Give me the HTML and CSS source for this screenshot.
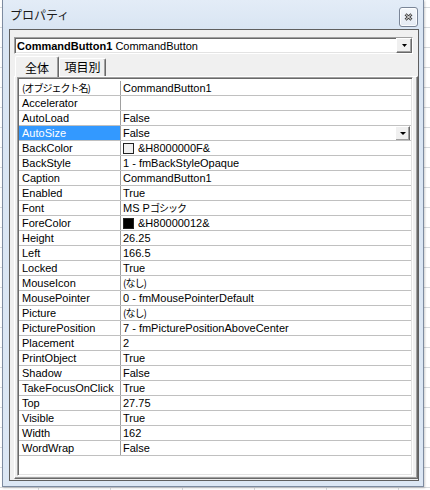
FILE: index.html
```html
<!DOCTYPE html>
<html lang="ja">
	<head>
		<meta charset="UTF-8" />
		<title>プロパティ</title>
		<link rel="stylesheet" href="styles.css">
	</head>
	<body>
		<div class="window">
			<div class="titlebar">
				<span class="title">プロパティ</span>
				<div class="closeBtn">
					<svg width="9" height="8" viewBox="0 0 9 8">
						<path d="M1.5 1.2 L7.5 6.8 M7.5 1.2 L1.5 6.8" stroke="#3c3c3c" stroke-width="2.8" fill="none" />
						<path d="M1.5 1.2 L7.5 6.8 M7.5 1.2 L1.5 6.8" stroke="#fff" stroke-width="1" fill="none" />
					</svg>
				</div>
			</div>

			<div class="client">
				<!-- object selector -->
				<div class="combo">
					<span class="comboText"><b>CommandButton1</b> CommandButton</span>
					<span class="ddBtn"><svg width="5" height="3" viewBox="0 0 5 3"><polygon points="0,0 5,0 2.5,3" fill="#000" /></svg></span>
				</div>

				<div class="tabs">
					<div class="tab active">全体</div>
					<div class="tab">項目別</div>
				</div>

				<div class="page">
					<div class="grid">
						<div class="row"><div class="name"><span class="jp">(オブジェクト名)</span></div><div class="value">CommandButton1</div></div>
						<div class="row"><div class="name">Accelerator</div><div class="value"></div></div>
						<div class="row"><div class="name">AutoLoad</div><div class="value">False</div></div>
						<div class="row"><div class="name sel">AutoSize</div><div class="value">False<span class="ddBtn cellBtn"><svg width="6" height="3" viewBox="0 0 6 3"><polygon points="0,0 6,0 3,3" fill="#000" /></svg></span></div></div>
						<div class="row"><div class="name">BackColor</div><div class="value"><span class="swatch lightSwatch"></span>&amp;H8000000F&amp;</div></div>
						<div class="row"><div class="name">BackStyle</div><div class="value">1 - fmBackStyleOpaque</div></div>
						<div class="row"><div class="name">Caption</div><div class="value">CommandButton1</div></div>
						<div class="row"><div class="name">Enabled</div><div class="value">True</div></div>
						<div class="row"><div class="name">Font</div><div class="value">MS P<span class="jp">ゴシック</span></div></div>
						<div class="row"><div class="name">ForeColor</div><div class="value"><span class="swatch darkSwatch"></span>&amp;H80000012&amp;</div></div>
						<div class="row"><div class="name">Height</div><div class="value">26.25</div></div>
						<div class="row"><div class="name">Left</div><div class="value">166.5</div></div>
						<div class="row"><div class="name">Locked</div><div class="value">True</div></div>
						<div class="row"><div class="name">MouseIcon</div><div class="value"><span class="jp">(なし)</span></div></div>
						<div class="row"><div class="name">MousePointer</div><div class="value">0 - fmMousePointerDefault</div></div>
						<div class="row"><div class="name">Picture</div><div class="value"><span class="jp">(なし)</span></div></div>
						<div class="row"><div class="name">PicturePosition</div><div class="value">7 - fmPicturePositionAboveCenter</div></div>
						<div class="row"><div class="name">Placement</div><div class="value">2</div></div>
						<div class="row"><div class="name">PrintObject</div><div class="value">True</div></div>
						<div class="row"><div class="name">Shadow</div><div class="value">False</div></div>
						<div class="row"><div class="name">TakeFocusOnClick</div><div class="value">True</div></div>
						<div class="row"><div class="name">Top</div><div class="value">27.75</div></div>
						<div class="row"><div class="name">Visible</div><div class="value">True</div></div>
						<div class="row"><div class="name">Width</div><div class="value">162</div></div>
						<div class="row"><div class="name">WordWrap</div><div class="value">False</div></div>
					</div>
				</div>
			</div>
		</div>
	</body>
</html>
```

FILE: styles.css
```css
* {
	margin: 0;
	padding: 0;
	box-sizing: border-box;
}

html, body {
	width: 430px;
	height: 490px;
	overflow: hidden;
}
body {
	/* excel sheet behind the dialog */
	background-color: #fff;
	background-image:
		linear-gradient(to right, #d8dbde 1px, transparent 1px),
		linear-gradient(to bottom, #d8dbde 1px, transparent 1px);
	background-size: 72px 20px;
	background-position: 38px 7px;
	font-family: "Liberation Sans", "Noto Sans CJK JP", sans-serif;
	font-size: 11px;
	color: #000;
}

.window {
	margin-left: 2px;
	width: 422px;
	height: 487px;
	border: 1px solid #7d8ba0;
	border-top: none;
	background: linear-gradient(to bottom, #e3ecf7, #d9e5f3 29px, #dce7f4);
	padding: 0 4px 5px 6px;
	box-shadow: 1px 1px 2px rgba(0, 0, 0, 0.2);
}

.titlebar {
	height: 29px;
	display: flex;
	justify-content: space-between;
	align-items: flex-start;
}
.title {
	font-family: "Noto Sans CJK JP", sans-serif;
	font-size: 12px;
	line-height: 14px;
	margin-top: 8px;
	margin-left: 1px;
	color: #1a1a1a;
}
.closeBtn {
	margin-top: 7px;
	margin-right: 1px;
	width: 19px;
	height: 20px;
	border: 1px solid #7a8597;
	border-radius: 3px;
	background: linear-gradient(to bottom, #f4f7fb, #e4eaf3);
	box-shadow: inset 0 0 0 1px rgba(255, 255, 255, 0.8);
	display: flex;
	align-items: center;
	justify-content: center;
}

.client {
	height: 452px;
	background: #f0f0f0;
	border: 1px solid #5f5f5f;
	padding: 7px 0 0 4px;
}

.combo {
	width: 399px;
	height: 17px;
	display: flex;
	align-items: center;
	background: #fff;
	border: 1px solid;
	border-color: #a0a0a0 #fff #fff #a0a0a0;
	box-shadow: inset 1px 1px 0 #696969, inset -1px -1px 0 #e3e3e3;
}
.comboText {
	padding-left: 2px;
	white-space: nowrap;
	line-height: 14px;
}
.ddBtn {
	margin-left: auto;
	width: 16px;
	height: 15px;
	background: #f0f0f0;
	border: 1px solid;
	border-color: #fff #696969 #696969 #fff;
	box-shadow: inset -1px -1px 0 #a0a0a0;
	display: flex;
	align-items: center;
	justify-content: center;
}
.ddBtn svg {
	display: block;
}

.tabs {
	display: flex;
	align-items: flex-end;
	height: 20px;
	margin-top: 2px;
	padding-left: 1px;
}
.tab {
	font-family: "Noto Sans CJK JP", sans-serif;
	font-size: 12px;
	width: 47px;
	height: 18px;
	line-height: 16px;
	text-align: center;
	background: #f0f0f0;
	border: 1px solid;
	border-bottom: none;
	border-color: #fff #696969 #fff #fff;
	box-shadow: inset -1px 0 0 #a0a0a0;
	border-radius: 2px 2px 0 0;
}
.tab.active {
	position: relative;
	z-index: 1;
	width: 44px;
	height: 21px;
	line-height: 22px;
	margin-bottom: -1px;
}

.page {
	width: 404px;
	height: 403px;
	border: 1px solid;
	border-color: #fff #696969 #696969 #fff;
	box-shadow: inset -1px -1px 0 #a0a0a0;
	padding: 0 3px 0 2px;
}

.grid {
	width: 396px;
	height: 399px;
	background: #fff;
	border: 1px solid;
	border-color: #a0a0a0 #fff #fff #a0a0a0;
	box-shadow: inset 1px 1px 0 #696969, inset -1px -1px 0 #e3e3e3;
	padding: 3px 1px 0 1px;
}

.row {
	display: flex;
	height: 15px;
	line-height: 14px;
	border-bottom: 1px solid #c0c0c0;
	white-space: nowrap;
}
.name {
	width: 102px;
	padding-left: 3px;
	border-right: 1px solid #a0a0a0;
	overflow: hidden;
}
.name.sel {
	background: #3399ff;
	color: #fff;
}
.value {
	flex: 1;
	display: flex;
	align-items: center;
	padding-left: 2px;
	overflow: hidden;
}
.cellBtn {
	align-self: flex-start;
	width: 15px;
	height: 15px;
	margin-right: 1px;
	margin-bottom: -1px;
}
.jp {
	font-family: "Noto Sans CJK JP", sans-serif;
	font-size: 10px;
	letter-spacing: -1px;
}
.swatch {
	width: 11px;
	height: 11px;
	margin-right: 4px;
	border: 1px solid #222;
}
.lightSwatch {
	background: #f0f0f0;
}
.darkSwatch {
	background: #000;
}
```
